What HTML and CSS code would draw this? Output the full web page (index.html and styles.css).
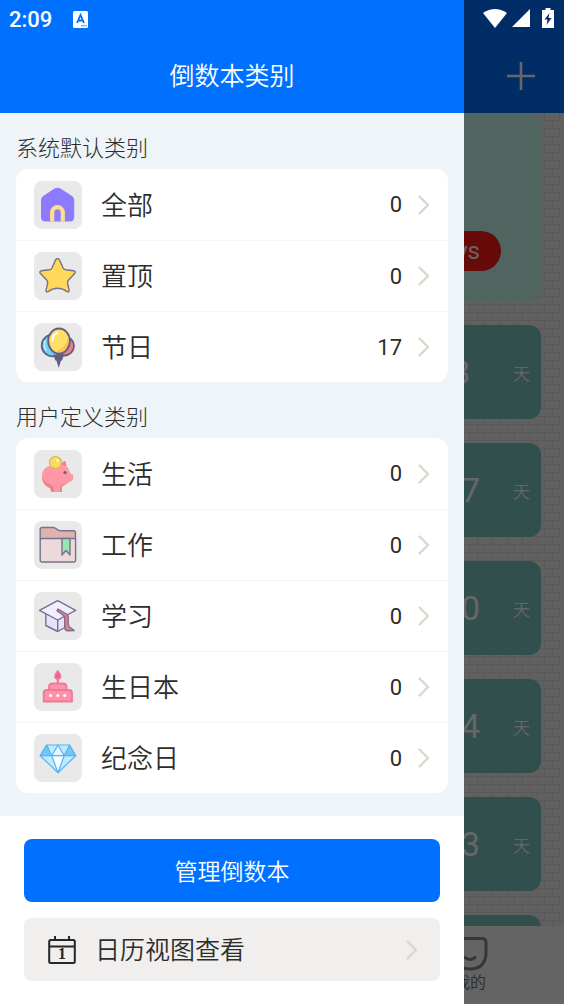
FILE: index.html
```html
<!DOCTYPE html>
<html lang="zh-CN">
<head>
    <meta charset="UTF-8">
    <meta name="viewport" content="width=device-width, initial-scale=1.0">
    <title>倒数本类别</title>
    <link rel="stylesheet" href="styles.css">
</head>
<body>
    <div class="screen">
        <!-- Home page under the drawer -->
        <div class="home">
            <svg class="wall" width="100%" height="100%">
                <defs>
                    <pattern id="brick" width="15" height="16" patternUnits="userSpaceOnUse">
                        <path d="M0 .5h15M0 8.500h15M4.500 0v8M12.500 8v8" stroke="#dedede"/>
                    </pattern>
                </defs>
                <rect width="100%" height="100%" fill="url(#brick)"/>
            </svg>
            <header class="home-header">
                <button class="add" type="button" aria-label="添加">
                    <svg width="30" height="30" viewBox="0 0 30 30" fill="none" stroke="#fff" stroke-width="2.6"><path d="M15 1v28M1 15h28"/></svg>
                </button>
            </header>
            <div class="home-list">
                <div class="hero"><span class="pill">Days</span></div>
                <div class="card"><span class="days short">8</span><span class="unit">天</span></div>
                <div class="card"><span class="days">7</span><span class="unit">天</span></div>
                <div class="card"><span class="days">0</span><span class="unit">天</span></div>
                <div class="card"><span class="days">4</span><span class="unit">天</span></div>
                <div class="card"><span class="days">3</span><span class="unit">天</span></div>
                <div class="card"></div>
            </div>
            <nav class="tabbar">
                <a class="tab" href="#">
                    <svg width="36" height="36" viewBox="0 0 36 36" fill="none" stroke="#888" stroke-width="3" stroke-linecap="round"><path d="M6 2.500H30q4 0 4 4V16q0 17-16 17T2 16V6.500q0-4 4-4z"/><path d="M13 21.500q5 4 10 0"/></svg>
                    <span>我的</span>
                </a>
            </nav>
        </div>
        <div class="overlay"></div>

        <!-- Category drawer -->
        <aside class="drawer">
            <header class="drawer-header">
                <div class="clock">
                    <span>2:09</span>
                    <svg width="15" height="17" viewBox="0 0 15 17"><rect width="15" height="17" rx="1.500" fill="#fff"/><path d="M4 12L7.500 4 11 12M5.500 9.500h4" fill="none" stroke="#0071ff" stroke-width="1.800"/><path d="M8 14.800h6" stroke="#0071ff" stroke-dasharray="1.500 .6"/></svg>
                </div>
                <h1>倒数本类别</h1>
            </header>

            <main class="groups">
                <h2>系统默认类别</h2>
                <div class="group">
                    <a class="row" href="#">
                        <svg class="icon" viewBox="0 0 48 48">
                            <path d="M20.500 7.500q3-1.600 6 0L38 15q2.200 1.500 2.200 4V36q0 4.500-4.500 4.500H11.500Q7 40.500 7 36V19q0-2.500 2.200-4z" fill="#8d7bff"/>
                            <path d="M18.200 40.500V31.500a5.300 5.300 0 0 1 10.600 0V40.500" fill="none" stroke="#ffdf8d" stroke-width="4.200"/>
                        </svg>
                        <span class="name">全部</span><span class="count">0</span>
                        <svg class="arrow" viewBox="0 0 12 20"><path d="M1.500 1.500L10 10l-8.500 8.500"/></svg>
                    </a>
                    <a class="row" href="#">
                        <svg class="icon" viewBox="0 0 48 48">
                            <path d="M21.500 8q2-3 4 0l3.600 8q.8 1.500 2.700 1.800l8 1q2.500.7.8 2.800l-6.200 6.700q-1.200 1.400-.8 3l1.600 7q0 2-2 1.500-4.500-3.500-9.600-3.500T14 39.800q-2.200.4-2-1.500l1.600-7q.3-1.700-.8-3L6.500 21.600q-1.600-2.100.8-2.800l8-1q1.900-.3 2.700-1.800z" fill="#ffd85c" stroke="#77708e" stroke-width="1.400" stroke-linejoin="round"/>
                        </svg>
                        <span class="name">置顶</span><span class="count">0</span>
                        <svg class="arrow" viewBox="0 0 12 20"><path d="M1.500 1.500L10 10l-8.500 8.500"/></svg>
                    </a>
                    <a class="row" href="#">
                        <svg class="icon" viewBox="0 0 48 48">
                            <g stroke="#625e83" stroke-width="1.800">
                                <circle cx="18.500" cy="22.500" r="10.800" fill="#70cff2"/>
                                <circle cx="30.500" cy="23" r="9.500" fill="#f47b86"/>
                                <path d="M20.500 32.500l1.500 4h1l1.700 5.500 1.700-5.500h1l1.500-4z" fill="#625e83"/>
                                <ellipse cx="25" cy="18" rx="10.800" ry="12.500" fill="#ffdf67"/>
                            </g>
                            <path d="M34 14q2 9-5.500 14.500-3 1.200-6 0Q32 25 34 14z" fill="#f8c24f"/>
                            <path d="M18.500 18q0-6 4.500-8" fill="none" stroke="#fff" stroke-width="2" stroke-linecap="round"/>
                            <path d="M11 18q-1.500 5 1 9" fill="none" stroke="#c4f2ff" stroke-width="1.500" stroke-linecap="round"/>
                        </svg>
                        <span class="name">节日</span><span class="count">17</span>
                        <svg class="arrow" viewBox="0 0 12 20"><path d="M1.500 1.500L10 10l-8.500 8.500"/></svg>
                    </a>
                </div>

                <h2>用户定义类别</h2>
                <div class="group">
                    <a class="row" href="#">
                        <svg class="icon" viewBox="0 0 48 48">
                            <path d="M8 28Q7 17 18 15.500l8-.5 4-4q2-.5 2.500 5l2 3 2 4.500 2.500 1.500q1 3-.5 5.500l-4 2-6.500 4v5.500H17.500l-1.500-4Q9 36 8 28z" fill="#ff97a4"/>
                            <path d="M8 25q1 8 9 9.500l2.500 2 1 5.500h-3l-1.500-4Q8 35 8 25zM34.500 32.500l-6.500 4V42h-2.500l1-6.500z" fill="#f0818f"/>
                            <path d="M26.500 15l4-4.200q1.500 1.300 1.800 5z" fill="#f0818f"/>
                            <circle cx="21.500" cy="12.500" r="6" fill="#f5dc66" stroke="#dfb455" stroke-width="1.200"/>
                            <circle cx="23.500" cy="10.500" r="1.500" fill="#fff6b5"/>
                            <circle cx="31" cy="22.500" r="1.600" fill="#625e83"/>
                        </svg>
                        <span class="name">生活</span><span class="count">0</span>
                        <svg class="arrow" viewBox="0 0 12 20"><path d="M1.500 1.500L10 10l-8.500 8.500"/></svg>
                    </a>
                    <a class="row" href="#">
                        <svg class="icon" viewBox="0 0 48 48" stroke="#77718f" stroke-width="1.400" stroke-linejoin="round">
                            <path d="M6.200 18V8.500q0-2 2-2H19q2 0 3.500 1.500t3.500 1.700h13.500q2 0 2 2V18z" fill="#deb3ae"/>
                            <rect x="6.200" y="17.500" width="35.400" height="23.500" rx="2" fill="#ecdada"/>
                            <path d="M28 17.500v16.500l4-4.500 4 4.500V17.500z" fill="#98e5b5"/>
                        </svg>
                        <span class="name">工作</span><span class="count">0</span>
                        <svg class="arrow" viewBox="0 0 12 20"><path d="M1.500 1.500L10 10l-8.500 8.500"/></svg>
                    </a>
                    <a class="row" href="#">
                        <svg class="icon" viewBox="0 0 48 48" stroke="#77708f" stroke-width="1.400" stroke-linejoin="round">
                            <path d="M11.800 21.500V33.500L23.700 39.500l8-4.500V22z" fill="#e5e3fb"/>
                            <path d="M23.700 28v11.500" fill="none"/>
                            <path d="M5.500 18.300L23.700 8.700l18 9.600-18 9.700z" fill="#f1efff"/>
                            <path d="M24 17l8.500 5q1.700 1 1.700 3v6.500q0 3 2 4l4 3-6.500.2q-3 0-3-4V26q0-1.500-1.200-2.500L23 18.700z" fill="#ef7c80"/>
                        </svg>
                        <span class="name">学习</span><span class="count">0</span>
                        <svg class="arrow" viewBox="0 0 12 20"><path d="M1.500 1.500L10 10l-8.500 8.500"/></svg>
                    </a>
                    <a class="row" href="#">
                        <svg class="icon" viewBox="0 0 48 48" fill="#ff92a9" stroke="#ee789c" stroke-width="1.800" stroke-linejoin="round">
                            <path d="M23.800 14v7" stroke-width="2.200"/>
                            <path d="M23.800 8q-5.500 6.800 0 8 5.500-1.200 0-8z" fill="#ef6284"/>
                            <path d="M15 27v-3q0-3.500 3.500-3.500H29q3.500 0 3.500 3.500v3z"/>
                            <path d="M9.700 38.500V30q0-3 3-3H35q3 0 3 3v8.500z"/>
                            <g fill="#fff" stroke="none"><circle cx="16.700" cy="32.500" r="1.500"/><circle cx="23.800" cy="32.500" r="1.500"/><circle cx="30.700" cy="32.500" r="1.500"/></g>
                        </svg>
                        <span class="name">生日本</span><span class="count">0</span>
                        <svg class="arrow" viewBox="0 0 12 20"><path d="M1.500 1.500L10 10l-8.500 8.500"/></svg>
                    </a>
                    <a class="row" href="#">
                        <svg class="icon" viewBox="0 0 48 48" stroke="#55b4f2" stroke-width="1.200" stroke-linejoin="round">
                            <path d="M12.700 11H35.500l6.200 10.700L24 38.800 6.200 21.700z" fill="#c0eaff"/>
                            <path d="M12.700 11L6.200 21.700h11.500zM35.500 11l6.200 10.700H30.200z" fill="#72c7f8"/>
                            <path d="M24 11l-6.300 10.700h12.500z" fill="#e4f7ff"/>
                            <path d="M17.700 21.700h12.500L24 38.800z" fill="#f6fdff"/>
                        </svg>
                        <span class="name">纪念日</span><span class="count">0</span>
                        <svg class="arrow" viewBox="0 0 12 20"><path d="M1.500 1.500L10 10l-8.500 8.500"/></svg>
                    </a>
                </div>
            </main>

            <footer class="actions">
                <button class="manage" type="button">管理倒数本</button>
                <button class="calendar" type="button">
                    <svg width="28" height="28" viewBox="0 0 28 28" fill="none" stroke="#262626" stroke-width="2">
                        <rect x="1.200" y="4" width="25.600" height="23" rx="1.500"/>
                        <path d="M1 10.500h26M7 0v5M21 0v5"/>
                        <text x="14" y="23" text-anchor="middle" fill="#262626" stroke="none">1</text>
                    </svg>
                    <span class="name">日历视图查看</span>
                    <svg class="arrow" viewBox="0 0 12 20"><path d="M1.500 1.500L10 10l-8.500 8.500"/></svg>
                </button>
            </footer>
        </aside>

        <!-- Wifi, signal and battery -->
        <div class="status">
            <svg width="24" height="19" viewBox="0 0 24 19" fill="#fff"><path d="M0 4q12-8 24 0L12 19z"/></svg>
            <svg width="18" height="18" viewBox="0 0 18 18" fill="#fff"><path d="M18 0v18H0z"/></svg>
            <svg class="battery" width="12" height="20" viewBox="0 0 12 20"><path d="M3.500 0h5v2H12v18H0V2h3.500z" fill="#fff"/><path d="M7.500 5L2.500 11.500h3L4.500 17l5-7h-3z" fill="#002d66"/></svg>
        </div>
    </div>
</body>
</html>
```
FILE: styles.css
```css
* {
    box-sizing: border-box;
}
body {
    margin: 0;
    font-family: Roboto, "Noto Sans CJK SC", sans-serif;
    color: #2d2d2d;
}
h1, h2 {
    margin: 0;
    font-weight: normal;
}
a {
    color: inherit;
    text-decoration: none;
}
button {
    border: 0;
    padding: 0;
    font-family: inherit;
    color: inherit;
    cursor: pointer;
}
svg {
    display: block;
    flex-shrink: 0;
}
.screen {
    position: relative;
    min-height: 100vh;
    overflow: hidden;
}

/* home page */
.home {
    position: absolute;
    inset: 0;
    display: flex;
    flex-direction: column;
    background: #efefef;
}
.wall {
    position: absolute;
    inset: 0;
    z-index: -1;
}
.home {
    z-index: 0;
}
.home-header {
    height: 113px;
    padding: 38px 28px 0 0;
    background: #0071ff;
    display: flex;
    align-items: center;
    justify-content: flex-end;
}
.add {
    background: none;
}
.home-list {
    flex: 1;
    min-height: 0;
    overflow: hidden;
    padding: 1px 23px 0;
    display: flex;
    flex-direction: column;
    gap: 24px;
}
.hero {
    flex: none;
    height: 187px;
    padding: 0 40px 30px 0;
    border-radius: 12px;
    background: #c8faf0;
    display: flex;
    align-items: flex-end;
    justify-content: flex-end;
}
.pill {
    padding: 0 21px;
    border-radius: 20px;
    background: #ff1a1a;
    color: #fff;
    font-size: 24px;
    line-height: 40px;
}
.card {
    flex: none;
    height: 94px;
    border-radius: 12px;
    padding-right: 11px;
    background: #78c6c1;
    color: #fff;
    display: flex;
    align-items: center;
    justify-content: flex-end;
}
.days {
    width: 100px;
    margin-right: 33px;
    font-size: 34px;
    text-align: right;
}
.short {
    padding-right: 10px;
}
.unit {
    font-size: 17px;
    font-weight: 350;
}
.tabbar {
    height: 78px;
    background: #fafafa;
    display: flex;
    justify-content: flex-end;
}
.tab {
    width: 33.33%;
    padding-top: 10px;
    display: flex;
    flex-direction: column;
    align-items: center;
    font-size: 16px;
    line-height: 22px;
    color: #777;
}
.overlay {
    position: absolute;
    inset: 0;
    background: rgba(0, 0, 0, 0.6);
}

/* drawer */
.drawer {
    position: relative;
    width: calc(100% - 100px);
    min-height: 100vh;
    background: #fff;
    display: flex;
    flex-direction: column;
}
.drawer-header {
    height: 113px;
    background: #0071ff;
    color: #fff;
}
.clock {
    height: 38px;
    padding-left: 9px;
    display: flex;
    align-items: center;
    gap: 21px;
    font-size: 22px;
    font-weight: 500;
}
h1 {
    font-size: 25px;
    font-weight: 350;
    line-height: 77px;
    text-align: center;
}
.groups {
    flex: 1;
    padding: 0 16px 23px;
    background: #eef4f8;
}
h2 {
    height: 56px;
    padding-top: 12px;
    font-family: KaiTi, STKaiti, "Noto Sans CJK SC", sans-serif;
    font-size: 22px;
    font-weight: 300;
    line-height: 42px;
}
.group {
    border-radius: 12px;
    background: #fff;
}
.row {
    height: 71px;
    padding: 0 18px;
    display: flex;
    align-items: center;
}
.row + .row {
    border-top: 1px solid #f4f6f7;
}
.icon {
    width: 48px;
    height: 48px;
    margin-right: 19px;
    border-radius: 8px;
    background: #e9e9e9;
}
.name {
    flex: 1;
    padding-bottom: 3px;
    font-weight: 350;
    text-align: left;
}
.row .name {
    font-size: 26px;
}
.count {
    margin-right: 16px;
    font-size: 22px;
}
.arrow {
    width: 12px;
    height: 20px;
    fill: none;
    stroke: #d9d8ce;
    stroke-width: 2.4;
    stroke-linecap: round;
    stroke-linejoin: round;
}
.actions {
    padding: 23px 24px;
    display: flex;
    flex-direction: column;
    gap: 16px;
}
.manage, .calendar {
    height: 63px;
    border-radius: 8px;
}
.manage {
    padding-bottom: 2px;
    background: #0071ff;
    color: #fff;
    font-size: 23px;
    font-weight: 350;
}
.calendar {
    padding: 0 22px 0 24px;
    background: #f0efee;
    display: flex;
    align-items: center;
    gap: 19px;
    font-size: 25px;
}
.calendar text {
    font-family: "Liberation Serif", serif;
    font-size: 16px;
    font-weight: bold;
}

/* status icons */
.status {
    position: absolute;
    top: 8px;
    right: 10px;
    height: 20px;
    display: flex;
    align-items: center;
    gap: 5px;
}
.battery {
    margin-left: 7px;
}
```
